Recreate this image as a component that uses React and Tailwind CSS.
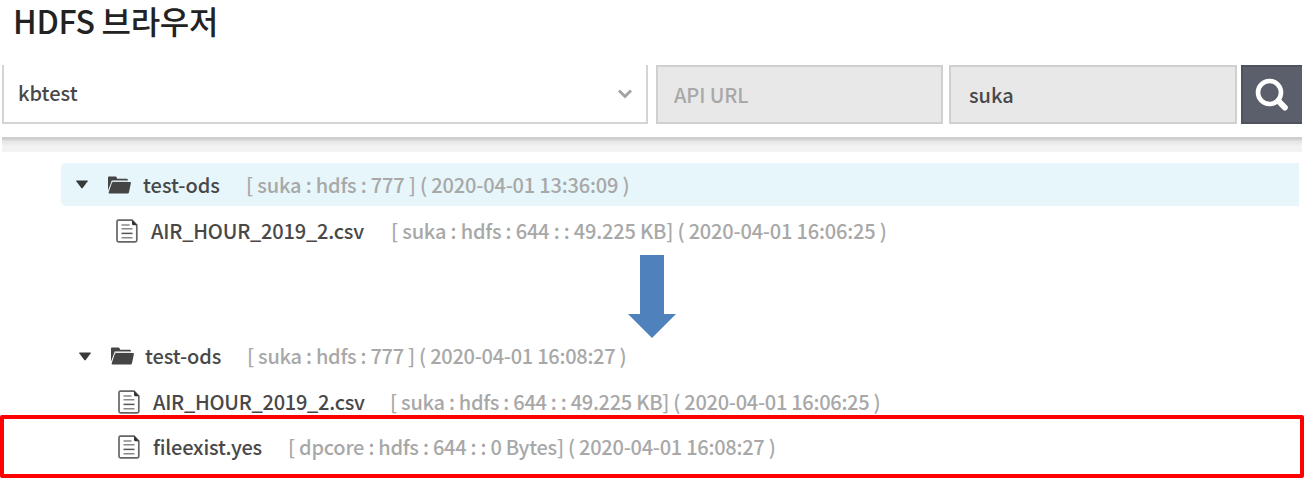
import React from "react";

function FolderIcon() {
  return (
    <svg viewBox="0 0 24 18" className="h-[18px] w-6 shrink-0">
      <path d="M1 14.500V1.400Q1 .600 1.800.600H8.600q.600 0 .900.600l.800 1.500H19.800q1 0 1 .900V4.400H6.200q-1.500 0-1.900 1.300Z" fill="#454545" />
      <path d="M4.300 5.700Q4.700 4.600 6.200 4.600H20.800" fill="none" stroke="#a4a8aa" strokeWidth="1.400" />
      <path d="M6.600 6H22.900q1.300 0 1 1.100l-1.900 9.200q-.200 1.300-1.500 1.300H2.800q-1.400 0-1.100-1.300L4.700 7.200Q5.100 6 6.600 6Z" fill="#454545" />
    </svg>
  );
}

function FileIcon() {
  return (
    <svg viewBox="0 0 22 24" className="h-6 w-[22px] shrink-0" fill="none">
      <path d="M2.500 1.200H16l4.800 4.800v15.300q0 1.500-1.500 1.500H2.500Q1 22.800 1 21.300V2.700Q1 1.200 2.500 1.200Z" stroke="#666" strokeWidth="1.700" />
      <path d="M16 .800l5.200 5.400h-3.700q-1.500 0-1.500-1.500Z" fill="#333" />
      <path d="M5.500 6h8M5.500 9.800h11M5.500 18.700h11" stroke="#888" strokeWidth="1.500" />
      <path d="M5.500 14.400h11" stroke="#555" strokeWidth="1.500" />
    </svg>
  );
}

function Caret() {
  return (
    <svg viewBox="0 0 12 9" className="h-[9px] w-3 shrink-0">
      <path d="M.600.500H11.400Q12 .500 11.700 1.200L6.700 8.100Q6 9 5.300 8.100L.300 1.200Q0 .500.600.500Z" fill="#3a3a3a" />
    </svg>
  );
}

export default function App() {
  return (
    <main className="flex h-[480px] w-[1304px] flex-col overflow-hidden bg-white font-['Noto_Sans_CJK_KR',sans-serif] text-[20px] font-medium tracking-[-0.2px] whitespace-pre text-[#484848]">
      <h1 className="flex h-[65px] items-start pl-[13px] text-[32px] leading-[40px] tracking-[-0.3px] text-[#222]">HDFS 브라우저</h1>

      <form className="flex h-[59px] shrink-0 pl-[2px]" onSubmit={(e) => e.preventDefault()}>
        <div className="flex w-[646px] items-center justify-between border-2 border-t-0 border-[#d4d4d4] pr-[13px] pl-[14px]">
          <span className="pb-[2px] tracking-normal">kbtest</span>
          <svg viewBox="0 0 16 10" className="h-[10px] w-4" fill="none">
            <path d="M2 1.500l6 6 6-6" stroke="#a2a2a2" strokeWidth="2.800" />
          </svg>
        </div>
        <div className="ml-2 flex w-[287px] items-center border-2 border-[#d0d0d0] bg-[#e8e8e8] pt-px pl-4 tracking-[-0.1px] text-[#a8a8a8]">API URL</div>
        <div className="ml-[6px] flex w-[288px] items-center border-2 border-[#d0d0d0] bg-[#e8e8e8] pt-px pl-[18px] tracking-normal">suka</div>
        <button type="button" aria-label="Search" className="ml-1 flex w-[61px] items-center justify-center border-2 border-r-0 border-[#4e525e] bg-[#5b5f6b] pr-[2px]">
          <svg viewBox="0 0 34 34" className="h-[34px] w-[34px]" fill="none" stroke="#fff" strokeLinecap="round">
            <circle cx="14.500" cy="14.500" r="11.500" strokeWidth="4.600" />
            <path d="M23.500 23l6.300 6.500" strokeWidth="6" />
          </svg>
        </button>
      </form>

      <div className="mt-[13px] mr-[2px] ml-[2px] h-[15px] shrink-0 bg-linear-to-b from-[#cecece] from-[12%] via-[#e6e6e6] via-[30%] to-[#f3f3f3] to-[65%]" />

      <section className="mt-[11px] flex flex-col">
        <div className="ml-[61px] flex h-[43px] w-[1238px] items-center rounded-l-[5px] bg-[#e7f6fa] pl-[15px]">
          <Caret />
          <span className="ml-[19px] flex"><FolderIcon /></span>
          <span className="ml-3 w-[103px] tracking-normal">test-ods</span>
          <span className="tracking-[-0.18px] text-[#a8a8a8]">[ suka : hdfs : 777 ] ( 2020-04-01 13:36:09 )</span>
        </div>
        <div className="flex h-[49px] items-center pl-[116px]">
          <FileIcon />
          <span className="ml-[13px] w-[240px]">AIR_HOUR_2019_2.csv</span>
          <span className="tracking-[-0.19px] text-[#a8a8a8]">[ suka : hdfs : 644 : : 49.225 KB] ( 2020-04-01 16:06:25 )</span>
        </div>
      </section>

      <svg viewBox="0 0 48 83" className="ml-[628px] h-[83px] w-12 shrink-0">
        <path d="M12 0h24v59h12L24 83 0 59h12Z" fill="#4f81bd" />
      </svg>

      <section className="flex h-[77px] shrink-0 flex-col">
        <div className="flex h-[36px] items-center pl-[79px]">
          <Caret />
          <span className="ml-[19px] flex"><FolderIcon /></span>
          <span className="ml-[11px] w-[102px] tracking-[-0.1px]">test-ods</span>
          <span className="tracking-[-0.27px] text-[#a8a8a8]">[ suka : hdfs : 777 ] ( 2020-04-01 16:08:27 )</span>
        </div>
        <div className="mt-[15px] flex h-[25px] items-center pl-[118px]">
          <FileIcon />
          <span className="ml-[13px] w-[237px] tracking-[-0.26px]">AIR_HOUR_2019_2.csv</span>
          <span className="tracking-[-0.28px] text-[#a8a8a8]">[ suka : hdfs : 644 : : 49.225 KB] ( 2020-04-01 16:06:25 )</span>
        </div>
      </section>
      <div className="flex h-[63px] shrink-0 items-center rounded-[2px] border-4 border-[#f00] pl-[114px]">
        <FileIcon />
        <span className="ml-[13px] w-[135px]">fileexist.yes</span>
        <span className="tracking-[-0.26px] text-[#a8a8a8]">[ dpcore : hdfs : 644 : : 0 Bytes] ( 2020-04-01 16:08:27 )</span>
      </div>
    </main>
  );
}
